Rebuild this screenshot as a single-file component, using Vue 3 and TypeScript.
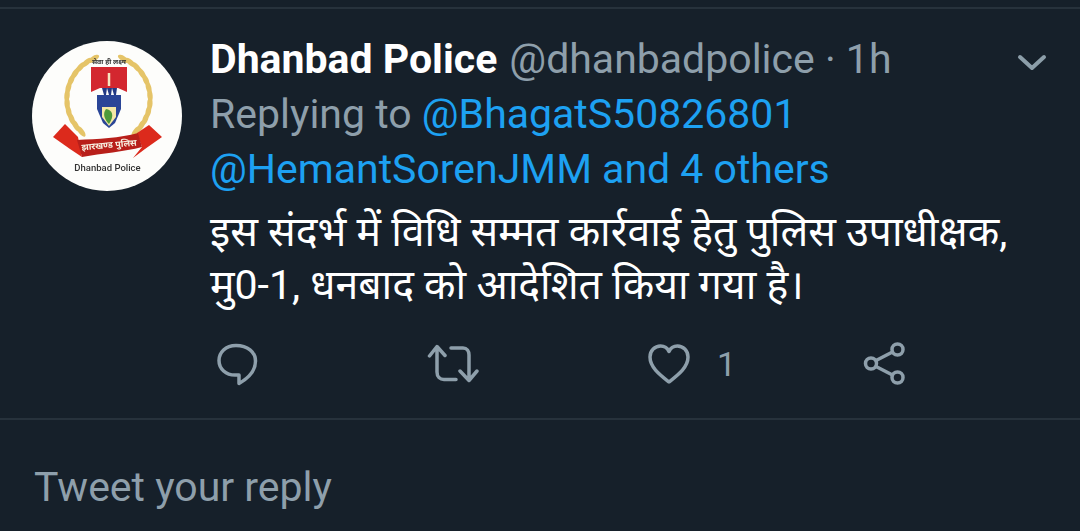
<script setup lang="ts">
interface Leaf { x: number; y: number; r: number; }
const handles: string = "@dhanbadpolice";

function wreath(side: 1 | -1): Leaf[] {
  const leaves: Leaf[] = [];
  for (let i = 0; i < 12; i++) {
    const t = i / 11;
    const a = (-1.2 + t * 2.05);
    const px = 52 * Math.cos(a) * 0.8;
    const py = 58 + 43 * Math.sin(a);
    leaves.push({
      x: 76.500 - side * px,
      y: py,
      r: side * (-58 + t * 96) * -1,
    });
  }
  return leaves;
}
const left = wreath(1);
const right = wreath(-1);
</script>

<template>
  <main class="screen">
    <article class="tweet">
      <div class="avatar">
        <svg viewBox="0 0 150 150" width="150" height="150">
          <circle cx="75" cy="75" r="75" fill="#fdfdfb" />
          <ellipse v-for="(l, i) in left" :key="'l' + i" :cx="l.x" :cy="l.y" rx="2.700" ry="6.500" :transform="`rotate(${l.r} ${l.x} ${l.y})`" fill="#e5c468" />
          <ellipse v-for="(l, i) in right" :key="'r' + i" :cx="l.x" :cy="l.y" rx="2.700" ry="6.500" :transform="`rotate(${l.r} ${l.x} ${l.y})`" fill="#e5c468" />
          <text x="77" y="23" text-anchor="middle" class="logo-motto">सेवा ही लक्ष्य</text>
          <path d="M59 26H95V51L86 47H68L59 51Z" fill="#d3272f" />
          <path d="M77 32V45" stroke="#f6e6c0" stroke-width="2.500" />
          <path d="M70 47H75L74 54H72ZM75 47H80L79 54H77ZM80 47H85L84 54H82Z" fill="#233a86" />
          <path d="M65 54H89V68L83 82 77 87 71 82 65 68Z" fill="#2a4597" />
          <path d="M70 66H84V76L77 85 70 76Z" fill="#f4e8a6" />
          <path d="M74 68C80 69 83 74 77 83 73 79 70 73 74 68Z" fill="#4e9a3a" />
          <path d="M21 96 33 83 46 96 50 116 38 108Z" fill="#dc2a1c" />
          <path d="M130 96 117 84 105 92 110 106 101 117 113 108Z" fill="#dc2a1c" />
          <path d="M45 99C66 98 88 97 106 92L110 106C92 111 70 112 50 116Z" fill="#b81f1a" />
          <text x="77" y="107" text-anchor="middle" transform="rotate(-5 77 104)" class="logo-banner">झारखण्ड पुलिस</text>
          <text x="75.500" y="129.500" text-anchor="middle" class="logo-text">Dhanbad Police</text>
        </svg>
      </div>

      <div class="body">
        <div class="headline">
          <span class="name">Dhanbad Police</span>
          <span class="meta">{{ handles }} · 1h</span>
          <svg class="chevron" viewBox="0 0 30 20" width="30" height="20">
            <path d="M3 4 15 15 27 4" fill="none" stroke="#8c9ea9" stroke-width="4" stroke-linecap="round" stroke-linejoin="round" />
          </svg>
        </div>
        <p class="reply"><span class="meta">Replying to </span><span class="link">@BhagatS50826801</span></p>
        <p class="reply"><span class="link">@HemantSorenJMM and 4 others</span></p>
        <p class="text">इस संदर्भ में विधि सम्मत कार्रवाई हेतु पुलिस उपाधीक्षक,<br />मु0-1, धनबाद को आदेशित किया गया है।</p>

        <div class="actions">
          <svg viewBox="0 0 42 44" width="42" height="44">
            <path d="M20 3.500C9.500 3.500 3 10.500 3 18.500 3 27 10 33 19 33H23V41.500C32 36.500 39.500 29 39.500 19 39.500 10 31.500 3.500 20 3.500Z" class="ico" />
          </svg>
          <svg viewBox="0 0 52 44" width="52" height="44">
            <path d="M2.500 14 10 4.500 18 13.500M10 5.500V30C10 35 13 37.500 17 37.500H29M24 6H36C40 6 42 9 42 13V38M33 29 42 38.500 50 29" class="ico" />
          </svg>
          <div class="like">
            <svg viewBox="0 0 44 42" width="44" height="42">
              <path d="M22 39C12 31 3 24 3 14 3 7.500 8 3 13.500 3 17 3 20.500 5 22 8.500 23.500 5 27 3 30.500 3 36 3 41 7.500 41 14 41 24 32 31 22 39Z" class="ico" />
            </svg>
            <span class="count">1</span>
          </div>
          <svg viewBox="0 0 44 44" width="44" height="44">
            <circle cx="8" cy="21.500" r="5.500" class="ico" />
            <circle cx="34.500" cy="7.500" r="5.500" class="ico" />
            <circle cx="34.500" cy="35.500" r="5.500" class="ico" />
            <path d="M13 18.500 29.500 10M13 24.500 29.500 33" class="ico" />
          </svg>
        </div>
      </div>
    </article>

    <footer class="composer">Tweet your reply</footer>
  </main>
</template>

<style>
html, body { margin: 0; background: #16202a; }
</style>

<style scoped>
.screen {
  width: 1080px;
  height: 531px;
  overflow: hidden;
  box-sizing: border-box;
  background: #16202a;
  color: #fff;
  font-family: Roboto, "Noto Sans", "Noto Sans Devanagari", sans-serif;
  padding-top: 7px;
}
.tweet {
  height: 413px;
  box-sizing: border-box;
  border-top: 2px solid #27323c;
  border-bottom: 2px solid #27323c;
  display: flex;
  padding: 30px 0 0 32px;
  gap: 28px;
}
.avatar { width: 150px; height: 150px; flex: none; margin-top: 2px; filter: blur(0.4px); }
.logo-text { font: 500 9.500px Roboto, sans-serif; fill: #333; }
.logo-motto { font: 700 7px "Noto Sans", sans-serif; fill: #333; }
.logo-banner { font: 700 9px "Noto Sans", sans-serif; fill: #f7efe0; }
.body { width: 837px; }
.headline { display: flex; align-items: center; height: 40px; white-space: pre; font-size: 41px; }
.name { font-weight: 700; color: #fff; margin-right: 12px; }
.meta { color: #8e9fab; }
.chevron { margin-left: auto; margin-top: 7px; }
.reply { margin: 15px 0 0; height: 40px; line-height: 40px; font-size: 41px; }
.reply + .reply { margin-top: 15px; }
.link { color: #1da1f2; }
.text { margin: 17px 0 0; font-size: 41px; line-height: 53px; color: #fff; }
.actions {
  display: grid;
  grid-template-columns: 211px 220px 216px 44px;
  align-items: center;
  margin-top: 30px;
  margin-left: 6px;
}
.ico { fill: none; stroke: #8e9fab; stroke-width: 3.500; stroke-linecap: round; stroke-linejoin: round; }
.like { display: flex; align-items: center; gap: 26px; }
.count { font-size: 34px; color: #8e9fab; }
.composer { padding: 43px 0 0 34px; font-size: 41px; color: #8e9fab; }
</style>
